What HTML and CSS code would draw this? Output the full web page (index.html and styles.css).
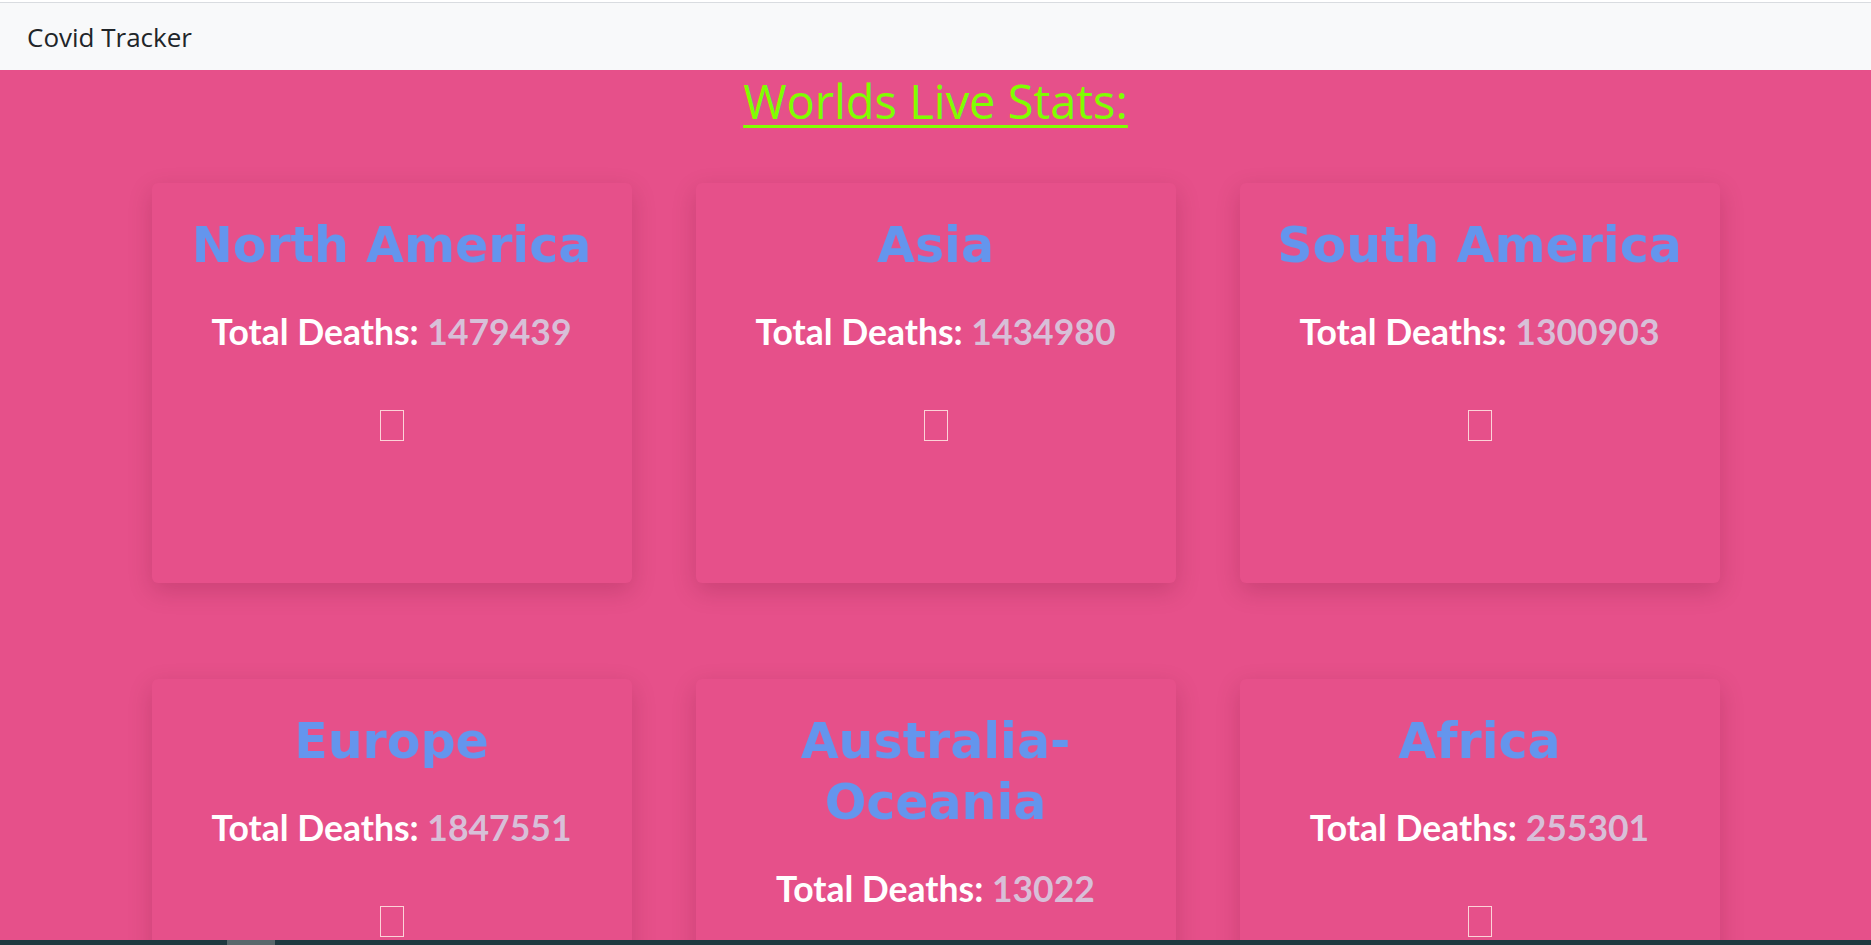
FILE: index.html
```html
<!DOCTYPE html>
<html lang="en">
<head>
<meta charset="utf-8">
<title>Covid Tracker</title>
<link rel="stylesheet" href="styles.css">
</head>
<body>
<nav class="navbar">
  <span class="brand">Covid Tracker</span>
</nav>
<main class="page">
  <h1 class="heading">Worlds Live Stats:</h1>
  <section class="grid">
    <article class="card">
      <h2 class="card-title">North America</h2>
      <p class="deaths">Total Deaths: <span class="num">1479439</span></p>
      <span class="icon"></span>
    </article>
    <article class="card">
      <h2 class="card-title">Asia</h2>
      <p class="deaths">Total Deaths: <span class="num">1434980</span></p>
      <span class="icon"></span>
    </article>
    <article class="card">
      <h2 class="card-title">South America</h2>
      <p class="deaths">Total Deaths: <span class="num">1300903</span></p>
      <span class="icon"></span>
    </article>
    <article class="card">
      <h2 class="card-title">Europe</h2>
      <p class="deaths">Total Deaths: <span class="num">1847551</span></p>
      <span class="icon"></span>
    </article>
    <article class="card">
      <h2 class="card-title">Australia-<br>Oceania</h2>
      <p class="deaths">Total Deaths: <span class="num">13022</span></p>
      <span class="icon"></span>
    </article>
    <article class="card">
      <h2 class="card-title">Africa</h2>
      <p class="deaths">Total Deaths: <span class="num">255301</span></p>
      <span class="icon"></span>
    </article>
  </section>
</main>
<div class="hscroll"><div class="hthumb"></div></div>
</body>
</html>
```

FILE: styles.css
```css
html, body {
  margin: 0;
  padding: 0;
  background: #e6508a;
  overflow: hidden;
}
body {
  padding-top: 2px;
  background: linear-gradient(#fff 0 2px, #e6508a 2px);
}
.navbar {
  height: 67px;
  border-top: 1px solid #d9dce0;
  background: #f8f9fa;
  display: flex;
  align-items: center;
  padding-left: 27px;
}
.brand {
  font-family: "Open Sans", "Noto Sans", sans-serif;
  font-size: 26px;
  color: #212529;
  margin-top: 1px;
}
.page {
  background: #e6508a;
  min-height: 900px;
}
.heading {
  margin: 0;
  text-align: center;
  font-family: "Open Sans", "Noto Sans", sans-serif;
  font-weight: 500;
  font-size: 47px;
  line-height: 56px;
  color: #7fff00;
  text-decoration: underline;
  text-decoration-thickness: 3px;
  text-underline-offset: 6px;
  padding-top: 3px;
}
.grid {
  display: grid;
  grid-template-columns: repeat(3, 480px);
  column-gap: 64px;
  row-gap: 96px;
  justify-content: center;
  margin-top: 54px;
}
.card {
  min-height: 400px;
  border-radius: 6px;
  background: #e6508a;
  box-shadow: 0 8px 24px rgba(80, 0, 30, 0.18);
  display: flex;
  flex-direction: column;
  align-items: center;
  padding-top: 32px;
  box-sizing: border-box;
}
.card-title {
  margin: 0;
  text-align: center;
  font-family: "DejaVu Sans", Verdana, sans-serif;
  font-weight: 700;
  font-size: 49px;
  line-height: 61px;
  color: #6495ed;
}
.deaths {
  margin: 35px 0 0;
  font-family: Lato, "Liberation Sans", sans-serif;
  font-weight: 700;
  font-size: 35.5px;
  line-height: 42px;
  color: #ffffff;
}
.num {
  color: #d8bfd8;
}
.icon {
  display: block;
  width: 22px;
  height: 29px;
  margin-top: 57px;
  border: 1.5px solid #fcd3d8;
}
.hscroll {
  position: fixed;
  left: 0;
  right: 0;
  bottom: 0;
  height: 5px;
  background: #1f3940;
}
.hthumb {
  position: absolute;
  left: 227px;
  width: 48px;
  top: 0;
  bottom: 0;
  background: #59686c;
}
```
